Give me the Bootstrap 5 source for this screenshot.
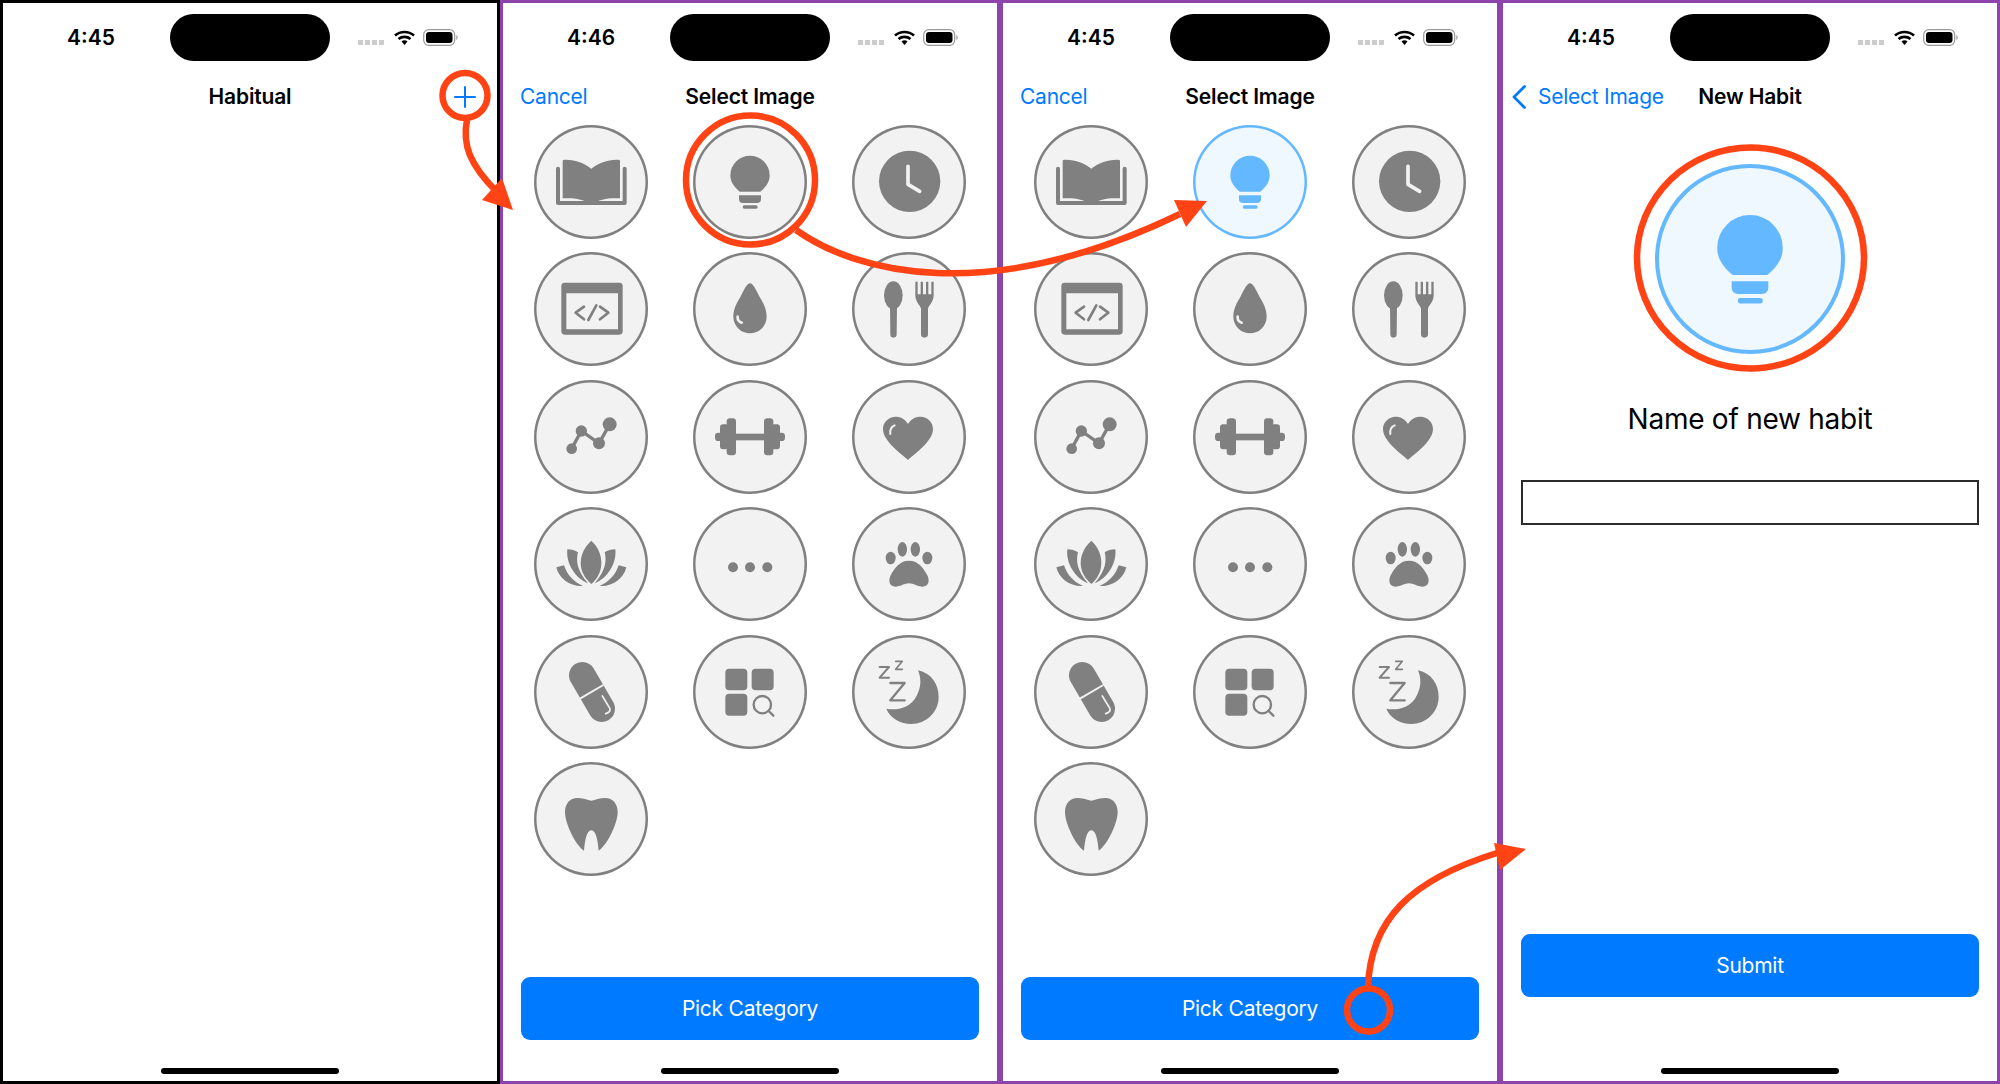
<!DOCTYPE html>
<html lang="en">

<head>
    <meta charset="UTF-8">
    <meta name="viewport" content="width=device-width, initial-scale=1.0">
    <title>Habitual</title>
    <link href="https://cdn.jsdelivr.net/npm/bootstrap@5.3.0/dist/css/bootstrap.min.css" rel="stylesheet">
    <style>
        body { width: 2000px; height: 1084px; overflow: hidden; font-family: Inter, "Liberation Sans", sans-serif; color: #000; }
        .pane { width: 500px; height: 1084px; border: 3px solid #8e44ad; }
        .pane-black { border-color: #000; }

        /* status bar */
        .stat-bar { margin-top: 11px; height: 47px; }
        .stat-time { width: 167px; padding-left: 64px; font-size: 21px; font-weight: 600; line-height: 47px; }
        .stat-island { width: 160px; height: 47px; background: #000; border-radius: 24px; }
        .stat-right { padding-left: 28px; }
        .stat-dots { gap: 2px; margin-top: 9px; margin-right: 10px; }
        .stat-dots span { width: 5px; height: 5px; background: #ccc; }

        /* nav bar */
        .nav-3col { display: grid; grid-template-columns: 1fr auto 1fr; height: 44px; margin-top: 13px; align-items: center; font-size: 21px; line-height: 46px; letter-spacing: -.15px; }
        .nav-title { font-weight: 600; grid-column: 2; }
        .nav-link-ios { color: #007aff; padding-left: 17px; grid-column: 1; grid-row: 1; text-decoration: none; letter-spacing: -.25px; }
        .nav-back { padding-left: 9px; gap: 12px; }
        .nav-plus { grid-column: 3; grid-row: 1; padding-right: 21px; }

        /* icon grid */
        .disc-grid { padding: 0 8.5px; }
        .disc-cell { height: 127.5px; }
        .icon-disc { width: 114px; height: 114px; background: #f2f2f2; box-shadow: inset 0 0 0 2.5px #808080; color: #808080; }
        .icon-disc svg { display: block; width: 100%; height: 100%; }
        .icon-disc.is-picked { background: #eff7ff; box-shadow: inset 0 0 0 2.5px #64b8ff; color: #64b8ff; }
        .disc-big { width: 190px; height: 190px; margin-top: 46px; }
        .disc-big.is-picked { box-shadow: inset 0 0 0 4px #64b8ff; }

        /* form + buttons */
        .habit-label { font-size: 28px; line-height: 34px; margin-top: 48px; letter-spacing: -.25px; }
        .habit-input { height: 45px; margin: 44px 18px 0; width: auto; border: 2px solid #2b2b2b; border-radius: 0; }
        .ios-btn { height: 63px; margin: 0 18px 28px; background: #007aff; border: 0; border-radius: 9px; color: #fff; font-size: 21px; letter-spacing: -.25px; }
        .ios-btn-high { margin-bottom: 71px; }
        .home-bar { width: 178px; height: 6px; margin: 0 auto 7px; background: #000; border-radius: 3px; }
        .notes-layer { left: 0; top: 0; pointer-events: none; }
    </style>
</head>

<body class="bg-white">
    <!-- icons used by both picker screens, drawn on the 342 grid of the disc -->
    <svg class="d-none" xmlns="http://www.w3.org/2000/svg">
        <symbol id="ic-book" viewBox="0 0 342 342">
            <path fill="currentColor" d="M86 108q0-4 6-4c32-1 58 10 80 27c22-17 48-28 80-27q6 0 6 4V220c-28-2-62 0-86 20c-24-20-58-22-86-20Z" />
            <path fill="none" stroke="currentColor" stroke-width="12" stroke-linejoin="round" stroke-linecap="round" d="M72 131V234H272V131" />
        </symbol>
        <symbol id="ic-bulb" viewBox="0 0 342 342">
            <path fill="currentColor" d="M140 200C125 188 112 172 112 151A59 59 0 0 1 230 151C230 172 217 188 202 200Z" />
            <path fill="currentColor" d="M138 211H204V222Q204 234 192 234H150Q138 234 138 222Z" />
            <rect fill="currentColor" x="149" y="241" width="45" height="10" rx="5" />
        </symbol>
        <symbol id="ic-clock" viewBox="0 0 342 342">
            <circle fill="currentColor" cx="173" cy="169" r="92" />
            <path fill="none" stroke="#f2f2f2" stroke-width="11" stroke-linecap="round" stroke-linejoin="round" d="M168 124V178L203 199" />
        </symbol>
        <symbol id="ic-code" viewBox="0 0 342 342">
            <path fill="currentColor" fill-rule="evenodd" d="M92 92H256Q266 92 266 102V238Q266 248 256 248H92Q82 248 82 238V102Q82 92 92 92ZM97 124V232H252V124Z" />
            <path fill="none" stroke="currentColor" stroke-width="8" stroke-linecap="round" stroke-linejoin="round" d="M150 164L125 182L150 202M187 160L163 204M198 164L223 182L198 202" />
        </symbol>
        <symbol id="ic-drop" viewBox="0 0 342 342">
            <path fill="currentColor" d="M171 94C180 94 190 115 200 135C212 155 221 172 221 194A50 50 0 0 1 121 194C121 172 130 155 142 135C152 115 162 94 171 94Z" />
            <path fill="none" stroke="#f2f2f2" stroke-width="8" stroke-linecap="round" d="M134 194C133 204 139 210 146 212" />
        </symbol>
        <symbol id="ic-food" viewBox="0 0 342 342">
            <ellipse fill="currentColor" cx="124" cy="130" rx="28" ry="42" />
            <path fill="currentColor" d="M114 160H135L134 247Q134 257 124 257Q115 257 115 247Z" />
            <path fill="currentColor" d="M190 89h7v38h9v-38h7v38h9v-38h7v38h9v-38h7V130C245 150 230 160 228 170V247Q228 257 217 257Q207 257 207 247V170C205 160 190 150 190 130Z" />
        </symbol>
        <symbol id="ic-chart" viewBox="0 0 342 342">
            <path fill="none" stroke="currentColor" stroke-width="10" d="M113 206L142 153L195 190L227 133" />
            <circle fill="currentColor" cx="113" cy="206" r="16" />
            <circle fill="currentColor" cx="142" cy="153" r="17" />
            <circle fill="currentColor" cx="195" cy="190" r="18" />
            <circle fill="currentColor" cx="227" cy="133" r="21" />
        </symbol>
        <symbol id="ic-gym" viewBox="0 0 342 342">
            <g fill="currentColor">
                <rect x="66" y="158" width="22" height="25" rx="10" />
                <rect x="81" y="133" width="26" height="75" rx="9" />
                <rect x="101" y="115" width="28" height="111" rx="10" />
                <rect x="125" y="161" width="92" height="20" />
                <rect x="213" y="115" width="28" height="111" rx="10" />
                <rect x="235" y="133" width="26" height="75" rx="9" />
                <rect x="254" y="158" width="22" height="25" rx="10" />
            </g>
        </symbol>
        <symbol id="ic-heart" viewBox="0 0 342 342">
            <path fill="currentColor" d="M168 240C150 222 93 185 93 147C93 125 112 110 130 110C147 110 160 118 168 132C176 118 189 110 206 110C225 110 243 125 243 147C243 185 186 222 168 240Z" />
            <path fill="none" stroke="#f2f2f2" stroke-width="6" stroke-linecap="round" d="M115 162C113 150 119 140 128 136" />
        </symbol>
        <symbol id="ic-lotus" viewBox="0 0 342 342">
            <g fill="currentColor">
                <path d="M172 101C190 118 202 140 202 168C202 195 190 215 172 231C154 215 140 195 140 168C140 140 154 118 172 101Z" />
                <path d="M100 127C112 127 124 130 132 136C126 160 128 190 162 229C125 215 95 170 100 127Z" />
                <path d="M67 181L90 175C100 205 120 225 147 237C110 240 75 215 67 181Z" />
                <path transform="matrix(-1 0 0 1 344 0)" d="M100 127C112 127 124 130 132 136C126 160 128 190 162 229C125 215 95 170 100 127Z" />
                <path transform="matrix(-1 0 0 1 344 0)" d="M67 181L90 175C100 205 120 225 147 237C110 240 75 215 67 181Z" />
            </g>
        </symbol>
        <symbol id="ic-more" viewBox="0 0 342 342">
            <circle fill="currentColor" cx="120" cy="181" r="15" />
            <circle fill="currentColor" cx="171" cy="181" r="15" />
            <circle fill="currentColor" cx="223" cy="181" r="15" />
        </symbol>
        <symbol id="ic-paw" viewBox="0 0 342 342">
            <g fill="currentColor">
                <ellipse cx="116" cy="153" rx="15" ry="19" />
                <ellipse cx="151" cy="127" rx="14" ry="22" />
                <ellipse cx="190" cy="127" rx="14" ry="22" />
                <ellipse cx="226" cy="153" rx="15" ry="19" />
                <path d="M171 161C200 161 215 185 226 205C234 222 230 240 210 239C195 238 185 229 171 229C157 229 147 238 132 239C112 240 108 222 116 205C127 185 142 161 171 161Z" />
            </g>
        </symbol>
        <symbol id="ic-pill" viewBox="0 0 342 342">
            <path fill="none" stroke="currentColor" stroke-width="80" stroke-linecap="round" d="M145 121L203 221" />
            <path fill="none" stroke="#f2f2f2" stroke-width="6" d="M138 191L208 150" />
            <path fill="none" stroke="#f2f2f2" stroke-width="5" stroke-linecap="round" stroke-linejoin="round" d="M205 183L228 221Q230 232 215 236" />
        </symbol>
        <symbol id="ic-apps" viewBox="0 0 342 342">
            <rect fill="currentColor" x="97" y="101" width="66" height="65" rx="12" />
            <rect fill="currentColor" x="176" y="101" width="66" height="65" rx="12" />
            <rect fill="currentColor" x="97" y="176" width="66" height="66" rx="12" />
            <circle fill="none" stroke="currentColor" stroke-width="7" cx="208" cy="209" r="26" />
            <path fill="none" stroke="currentColor" stroke-width="7" stroke-linecap="round" d="M227 228L241 242" />
        </symbol>
        <symbol id="ic-sleep" viewBox="0 0 342 342">
            <path fill="currentColor" d="M198 106C240 115 260 150 260 186C260 232 222 267 178 267C145 267 115 250 103 221C125 226 175 225 195 180C208 155 208 130 198 106Z" />
            <g fill="none" stroke="currentColor" stroke-linejoin="round" stroke-linecap="round">
                <path stroke-width="7" d="M115 144H158L115 196H158" />
                <path stroke-width="6" d="M83 96H111L83 128H111" />
                <path stroke-width="5" d="M131 79H151L131 103H151" />
            </g>
        </symbol>
        <symbol id="ic-tooth" viewBox="0 0 342 342">
            <path fill="currentColor" d="M172 116C155 112 145 108 130 108C108 108 93 125 93 150C93 185 125 250 150 266C153 235 158 205 172 205C186 205 191 235 194 266C219 250 251 185 251 150C251 125 236 108 214 108C199 108 189 112 172 116Z" />
        </symbol>
        <symbol id="ic-wifi" viewBox="0 0 21 15">
            <path fill="none" stroke="#000" stroke-width="2.6" d="M1 5.6C6.500 .8 14.500 .8 20 5.600M4.500 9C7.800 6.200 13.200 6.200 16.500 9" />
            <path fill="#000" d="M7.500 11.400C9.200 10 11.800 10 13.500 11.400L10.500 15Z" />
        </symbol>
        <symbol id="ic-batt" viewBox="0 0 35 17">
            <rect x=".7" y=".7" width="31" height="15.600" rx="5" fill="#fff" stroke="#999" stroke-width="1.200" />
            <rect x="3" y="3" width="26.500" height="11" rx="3" fill="#000" />
            <path d="M33.200 6V11C34.400 10.500 34.800 9.500 34.800 8.500S34.400 6.500 33.200 6Z" fill="#aaa" />
        </symbol>
    </svg>

    <main class="d-flex position-relative">
        <!-- Habit list -->
        <section class="pane pane-black d-flex flex-column">
            <div class="stat-bar d-flex">
                <div class="stat-time">4:45</div>
                <div class="stat-island"></div>
                <div class="stat-right d-flex align-items-center">
                    <div class="stat-dots d-flex"><span></span><span></span><span></span><span></span></div>
                    <svg width="21" height="15" class="me-2"><use href="#ic-wifi" /></svg>
                    <svg width="35" height="17"><use href="#ic-batt" /></svg>
                </div>
            </div>
            <div class="nav-3col">
                <div class="nav-title">Habitual</div>
                <div class="nav-plus d-flex justify-content-end">
                    <svg width="22" height="22" viewBox="0 0 22 22"><path fill="none" stroke="#007aff" stroke-width="2" stroke-linecap="round" d="M1 11H21M11 1V21" /></svg>
                </div>
            </div>
            <div class="home-bar mt-auto"></div>
        </section>

        <!-- Picker -->
        <section class="pane d-flex flex-column">
            <div class="stat-bar d-flex">
                <div class="stat-time">4:46</div>
                <div class="stat-island"></div>
                <div class="stat-right d-flex align-items-center">
                    <div class="stat-dots d-flex"><span></span><span></span><span></span><span></span></div>
                    <svg width="21" height="15" class="me-2"><use href="#ic-wifi" /></svg>
                    <svg width="35" height="17"><use href="#ic-batt" /></svg>
                </div>
            </div>
            <div class="nav-3col">
                <a href="#" class="nav-link-ios">Cancel</a>
                <div class="nav-title">Select Image</div>
            </div>
            <div class="disc-grid row row-cols-3 g-0 mx-0">
                <div class="col disc-cell d-flex align-items-center justify-content-center"><div class="icon-disc rounded-circle"><svg><use href="#ic-book" /></svg></div></div>
                <div class="col disc-cell d-flex align-items-center justify-content-center"><div class="icon-disc rounded-circle"><svg><use href="#ic-bulb" /></svg></div></div>
                <div class="col disc-cell d-flex align-items-center justify-content-center"><div class="icon-disc rounded-circle"><svg><use href="#ic-clock" /></svg></div></div>
                <div class="col disc-cell d-flex align-items-center justify-content-center"><div class="icon-disc rounded-circle"><svg><use href="#ic-code" /></svg></div></div>
                <div class="col disc-cell d-flex align-items-center justify-content-center"><div class="icon-disc rounded-circle"><svg><use href="#ic-drop" /></svg></div></div>
                <div class="col disc-cell d-flex align-items-center justify-content-center"><div class="icon-disc rounded-circle"><svg><use href="#ic-food" /></svg></div></div>
                <div class="col disc-cell d-flex align-items-center justify-content-center"><div class="icon-disc rounded-circle"><svg><use href="#ic-chart" /></svg></div></div>
                <div class="col disc-cell d-flex align-items-center justify-content-center"><div class="icon-disc rounded-circle"><svg><use href="#ic-gym" /></svg></div></div>
                <div class="col disc-cell d-flex align-items-center justify-content-center"><div class="icon-disc rounded-circle"><svg><use href="#ic-heart" /></svg></div></div>
                <div class="col disc-cell d-flex align-items-center justify-content-center"><div class="icon-disc rounded-circle"><svg><use href="#ic-lotus" /></svg></div></div>
                <div class="col disc-cell d-flex align-items-center justify-content-center"><div class="icon-disc rounded-circle"><svg><use href="#ic-more" /></svg></div></div>
                <div class="col disc-cell d-flex align-items-center justify-content-center"><div class="icon-disc rounded-circle"><svg><use href="#ic-paw" /></svg></div></div>
                <div class="col disc-cell d-flex align-items-center justify-content-center"><div class="icon-disc rounded-circle"><svg><use href="#ic-pill" /></svg></div></div>
                <div class="col disc-cell d-flex align-items-center justify-content-center"><div class="icon-disc rounded-circle"><svg><use href="#ic-apps" /></svg></div></div>
                <div class="col disc-cell d-flex align-items-center justify-content-center"><div class="icon-disc rounded-circle"><svg><use href="#ic-sleep" /></svg></div></div>
                <div class="col disc-cell d-flex align-items-center justify-content-center"><div class="icon-disc rounded-circle"><svg><use href="#ic-tooth" /></svg></div></div>
            </div>
            <button type="button" class="btn ios-btn mt-auto">Pick Category</button>
            <div class="home-bar"></div>
        </section>

        <!-- Picker with the bulb picked -->
        <section class="pane d-flex flex-column">
            <div class="stat-bar d-flex">
                <div class="stat-time">4:45</div>
                <div class="stat-island"></div>
                <div class="stat-right d-flex align-items-center">
                    <div class="stat-dots d-flex"><span></span><span></span><span></span><span></span></div>
                    <svg width="21" height="15" class="me-2"><use href="#ic-wifi" /></svg>
                    <svg width="35" height="17"><use href="#ic-batt" /></svg>
                </div>
            </div>
            <div class="nav-3col">
                <a href="#" class="nav-link-ios">Cancel</a>
                <div class="nav-title">Select Image</div>
            </div>
            <div class="disc-grid row row-cols-3 g-0 mx-0">
                <div class="col disc-cell d-flex align-items-center justify-content-center"><div class="icon-disc rounded-circle"><svg><use href="#ic-book" /></svg></div></div>
                <div class="col disc-cell d-flex align-items-center justify-content-center"><div class="icon-disc is-picked rounded-circle"><svg><use href="#ic-bulb" /></svg></div></div>
                <div class="col disc-cell d-flex align-items-center justify-content-center"><div class="icon-disc rounded-circle"><svg><use href="#ic-clock" /></svg></div></div>
                <div class="col disc-cell d-flex align-items-center justify-content-center"><div class="icon-disc rounded-circle"><svg><use href="#ic-code" /></svg></div></div>
                <div class="col disc-cell d-flex align-items-center justify-content-center"><div class="icon-disc rounded-circle"><svg><use href="#ic-drop" /></svg></div></div>
                <div class="col disc-cell d-flex align-items-center justify-content-center"><div class="icon-disc rounded-circle"><svg><use href="#ic-food" /></svg></div></div>
                <div class="col disc-cell d-flex align-items-center justify-content-center"><div class="icon-disc rounded-circle"><svg><use href="#ic-chart" /></svg></div></div>
                <div class="col disc-cell d-flex align-items-center justify-content-center"><div class="icon-disc rounded-circle"><svg><use href="#ic-gym" /></svg></div></div>
                <div class="col disc-cell d-flex align-items-center justify-content-center"><div class="icon-disc rounded-circle"><svg><use href="#ic-heart" /></svg></div></div>
                <div class="col disc-cell d-flex align-items-center justify-content-center"><div class="icon-disc rounded-circle"><svg><use href="#ic-lotus" /></svg></div></div>
                <div class="col disc-cell d-flex align-items-center justify-content-center"><div class="icon-disc rounded-circle"><svg><use href="#ic-more" /></svg></div></div>
                <div class="col disc-cell d-flex align-items-center justify-content-center"><div class="icon-disc rounded-circle"><svg><use href="#ic-paw" /></svg></div></div>
                <div class="col disc-cell d-flex align-items-center justify-content-center"><div class="icon-disc rounded-circle"><svg><use href="#ic-pill" /></svg></div></div>
                <div class="col disc-cell d-flex align-items-center justify-content-center"><div class="icon-disc rounded-circle"><svg><use href="#ic-apps" /></svg></div></div>
                <div class="col disc-cell d-flex align-items-center justify-content-center"><div class="icon-disc rounded-circle"><svg><use href="#ic-sleep" /></svg></div></div>
                <div class="col disc-cell d-flex align-items-center justify-content-center"><div class="icon-disc rounded-circle"><svg><use href="#ic-tooth" /></svg></div></div>
            </div>
            <button type="button" class="btn ios-btn mt-auto">Pick Category</button>
            <div class="home-bar"></div>
        </section>

        <!-- New habit form -->
        <section class="pane d-flex flex-column">
            <div class="stat-bar d-flex">
                <div class="stat-time">4:45</div>
                <div class="stat-island"></div>
                <div class="stat-right d-flex align-items-center">
                    <div class="stat-dots d-flex"><span></span><span></span><span></span><span></span></div>
                    <svg width="21" height="15" class="me-2"><use href="#ic-wifi" /></svg>
                    <svg width="35" height="17"><use href="#ic-batt" /></svg>
                </div>
            </div>
            <div class="nav-3col">
                <a href="#" class="nav-link-ios nav-back d-flex align-items-center">
                    <svg width="14" height="24" viewBox="0 0 14 24"><path fill="none" stroke="#007aff" stroke-width="2.800" stroke-linecap="round" stroke-linejoin="round" d="M12.500 1.500L2 12L12.500 22.500" /></svg>
                    <span>Select Image</span>
                </a>
                <div class="nav-title">New Habit</div>
            </div>
            <div class="icon-disc disc-big is-picked rounded-circle mx-auto"><svg><use href="#ic-bulb" /></svg></div>
            <div class="habit-label text-center">Name of new habit</div>
            <input type="text" class="form-control habit-input">
            <button type="button" class="btn ios-btn ios-btn-high mt-auto">Submit</button>
            <div class="home-bar"></div>
        </section>

        <!-- red callouts over the screens -->
        <svg class="notes-layer position-absolute" width="2000" height="1084" viewBox="0 0 2000 1084">
            <g fill="none" stroke="#ff4314" stroke-width="6.500">
                <circle cx="465" cy="95.500" r="22.500" />
                <path d="M467 120C462 145 470 165 497 192" />
                <circle cx="750.500" cy="180" r="64.500" />
                <path d="M796 230C855 272 985 308 1180 214" />
                <circle cx="1368.500" cy="1010" r="21.500" />
                <path d="M1368 988C1370 920 1410 880 1497 853" />
                <ellipse cx="1750.500" cy="258" rx="113.500" ry="110.500" />
            </g>
            <g fill="#ff4314">
                <path d="M502 178L513 210L482 200Z" />
                <path d="M1174 200L1207 201L1186 227Z" />
                <path d="M1494 843L1526 849L1500 870Z" />
            </g>
        </svg>
    </main>

    <script src="https://cdn.jsdelivr.net/npm/bootstrap@5.3.0/dist/js/bootstrap.bundle.min.js"></script>
</body>

</html>
